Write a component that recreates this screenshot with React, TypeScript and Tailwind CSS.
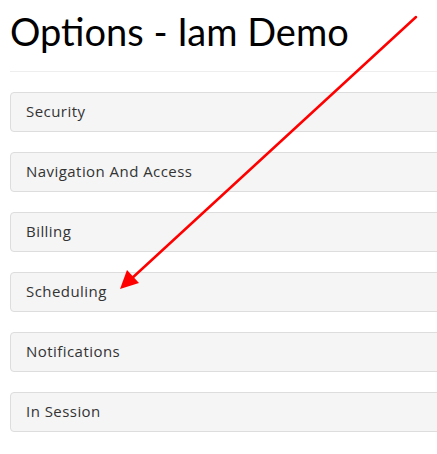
const sections = [
  "Security",
  "Navigation And Access",
  "Billing",
  "Scheduling",
  "Notifications",
  "In Session",
];

export default function App() {
  return (
    <div className="relative h-[454px] w-[437px] overflow-hidden bg-white font-['Lato',sans-serif] text-[#333]">
      <div className="pl-[10px]">
        <h1 className="pt-[9px] text-[38px] leading-[44px] text-black">Options - Iam Demo</h1>
        <hr className="mt-[18px] border-[#eee]" />
        <div className="mt-5 flex w-[450px] flex-col gap-5">
          {sections.map((name) => (
            <div
              key={name}
              className="flex h-10 items-center rounded border border-[#ddd] bg-[#f5f5f5] px-[15px] pb-[2px] font-['Open_Sans',sans-serif] text-[15px] tracking-[0.45px]"
            >
              {name}
            </div>
          ))}
        </div>
      </div>

      {/* annotation arrow */}
      <svg className="pointer-events-none absolute inset-0" width="437" height="454">
        <line x1="416" y1="17" x2="130" y2="280" stroke="#ff0000" strokeWidth="2.5" strokeLinecap="round" />
        <polygon points="120,289 127,270 139,283" fill="#ff0000" />
      </svg>
    </div>
  );
}
